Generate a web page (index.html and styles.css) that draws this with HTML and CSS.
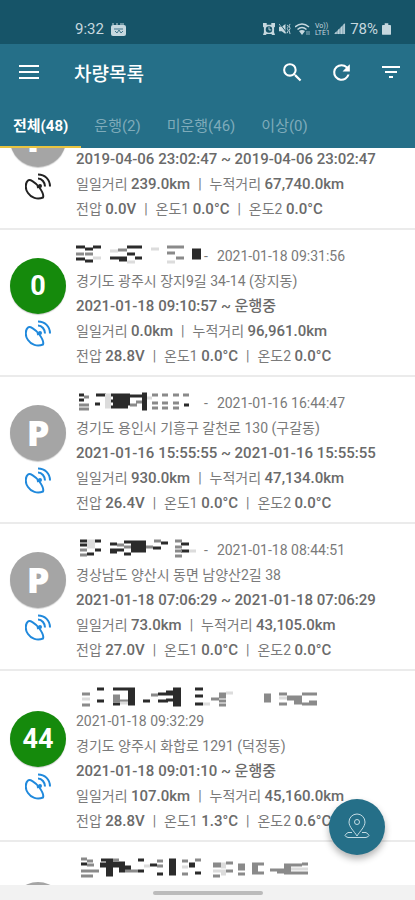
FILE: index.html
```html
<!DOCTYPE html>
<html lang="ko">
<head>
    <meta charset="UTF-8">
    <meta name="viewport" content="width=device-width, initial-scale=1.0">
    <title>차량목록</title>
    <link rel="stylesheet" href="styles.css">
</head>
<body>
    <!-- shared icon -->
    <svg class="defs" aria-hidden="true">
        <symbol id="dish" viewBox="0 0 26 27">
            <path d="M3 7.500C5 6 10 9 14 14C17 18 19 22 18 24.500C12 27 6 24.500 3 20C0 16 0 10 3 7.500ZM12 14.500l3-1.500M13 5.500c4 0 7 4 7 8M13 1.500c7 0 12 5 12 12" />
            <circle cx="15" cy="13" r="1" />
        </symbol>
    </svg>

    <div class="status-bar">
        <span>9:32</span>
        <svg width="15" height="13" viewBox="0 0 15 13"><path d="M1 1h2M5 1h2M9 1h4" stroke="#c6d8df" stroke-width="1"/><rect y="2" width="15" height="11" rx="2" fill="#c6d8df"/><path d="M3 6h9M4 8l2 2 2-3 2 3 2-2" stroke="#40758a" fill="none"/></svg>
        <div class="status-icons">
            <svg width="12" height="12" viewBox="0 0 13 13"><path d="M0 0h4v2h5V0h4v4l-1 1v5l1 3h-3l-1-1H4l-1 1H0l1-3V5L0 4z" fill="#c6d8df"/><circle cx="6.500" cy="7" r="3.500" fill="#165468"/><path d="M6.500 4.500V7.500H9" stroke="#c6d8df" fill="none"/></svg>
            <svg width="12" height="12" viewBox="0 0 13 13"><path d="M0 4h3l4-3v11L3 9H0z" fill="#c6d8df"/><path d="M0 1l8 10M9 2l1 2-1 2 1 2-1 3M12 1l-1 2 1 3-1 2 1 4" stroke="#c6d8df" fill="none"/><path d="M1 1l7 9" stroke="#165468"/></svg>
            <svg width="15" height="13" viewBox="0 0 15 13"><path d="M0 4Q7 -2 14 4M2.500 6.500Q7 2.500 11.500 6.500" stroke="#c6d8df" stroke-width="1.500" fill="none"/><path d="M4 8q3-2 6 0l-3 4z" fill="#c6d8df"/><path d="M12 8v4M14 8v4" stroke="#8fb0bd"/></svg>
            <svg class="volte" width="16" height="14" viewBox="0 0 16 14"><text x="1" y="6">Vo))</text><text x="1" y="13">LTE1</text></svg>
            <svg width="12" height="12" viewBox="0 0 13 13"><path d="M0 12L12 0v12z" fill="#8fb0bd"/><path d="M2 12v-2M5 12V7M8 12V4M11 12V1" stroke="#c6d8df"/></svg>
            <span>78%</span>
            <svg width="9" height="12" viewBox="0 0 10 13"><path d="M3 0h4v2h2q1 0 1 1v9q0 1-1 1H1q-1 0-1-1V3q0-1 1-1h2z" fill="#c6d8df"/></svg>
        </div>
    </div>

    <header class="app-bar">
        <button type="button" class="menu-button" aria-label="메뉴">
            <svg width="20" height="14" viewBox="0 0 20 14"><path d="M0 1h20M0 7h20M0 13h20" stroke="currentColor" stroke-width="2"/></svg>
        </button>
        <h1>차량목록</h1>
        <button type="button" aria-label="검색">
            <svg width="25" height="25" viewBox="0 0 24 24"><path fill="currentColor" d="M15.500 14h-.790l-.280-.270A6.470 6.470 0 0 0 16 9.500 6.500 6.500 0 1 0 9.500 16c1.610 0 3.090-.590 4.230-1.570l.270.280v.790l5 4.990L20.490 19l-4.990-5zm-6 0C7.010 14 5 11.990 5 9.500S7.010 5 9.500 5 14 7.010 14 9.500 11.990 14 9.500 14z"/></svg>
        </button>
        <button type="button" aria-label="새로고침">
            <svg width="25" height="25" viewBox="0 0 24 24"><path fill="currentColor" d="M17.650 6.350A7.960 7.960 0 0 0 12 4a8 8 0 1 0 7.730 10h-2.080A6 6 0 1 1 12 6c1.660 0 3.140.690 4.220 1.780L13 11h7V4l-2.350 2.350z"/></svg>
        </button>
        <button type="button" aria-label="필터">
            <svg width="24" height="24" viewBox="0 0 24 24"><path fill="currentColor" d="M10 18h4v-2h-4v2zM3 6v2h18V6H3zm3 7h12v-2H6v2z"/></svg>
        </button>
    </header>

    <nav class="tabs">
        <a href="#all" class="active">전체(48)</a>
        <a href="#running">운행(2)</a>
        <a href="#stopped">미운행(46)</a>
        <a href="#error">이상(0)</a>
    </nav>

    <main class="vehicle-list" id="vehicleList">
        <article class="vehicle">
            <div class="vehicle-state">
                <span class="badge parked">P</span>
                <svg class="dish offline"><use href="#dish"/></svg>
            </div>
            <div class="vehicle-info">
                <p class="name"></p>
                <p></p>
                <p class="period">2019-04-06 23:02:47 ~ 2019-04-06 23:02:47</p>
                <p>일일거리 <b>239.0km</b><i>|</i>누적거리 <b>67,740.0km</b></p>
                <p>전압 <b>0.0V</b><i>|</i>온도1 <b>0.0°C</b><i>|</i>온도2 <b>0.0°C</b></p>
            </div>
        </article>

        <article class="vehicle">
            <div class="vehicle-state">
                <span class="badge running">0</span>
                <svg class="dish"><use href="#dish"/></svg>
            </div>
            <div class="vehicle-info">
                <p class="name">
                    <svg class="mosaic" width="128" height="25">
                        <path class="dark" d="M0 3h9M9 5h8M17 3h8M0 15h9M9 17h8M51 3h15M51 10h8M34 14h9M43 14h8M43 16h8M59 14h7M116 6h9M116 9h9M116 12h9M116 14h9"/>
                        <path class="mid" d="M0 10h8M9 10h8M42 6h9M91 3h17M91 9h8M100 14h8"/>
                        <path class="light" d="M17 14h8M34 7h8M51 18h8M75 5h8M91 18h8"/>
                    </svg>
                    <span>-</span><time>2021-01-18 09:31:56</time>
                </p>
                <p>경기도 광주시 장지9길 34-14 (장지동)</p>
                <p class="period">2021-01-18 09:10:57 ~ 운행중</p>
                <p>일일거리 <b>0.0km</b><i>|</i>누적거리 <b>96,961.0km</b></p>
                <p>전압 <b>28.8V</b><i>|</i>온도1 <b>0.0°C</b><i>|</i>온도2 <b>0.0°C</b></p>
            </div>
        </article>

        <article class="vehicle">
            <div class="vehicle-state">
                <span class="badge parked">P</span>
                <svg class="dish"><use href="#dish"/></svg>
            </div>
            <div class="vehicle-info">
                <p class="name">
                    <svg class="mosaic" width="128" height="25">
                        <path class="dark" d="M3 4h5M3 9h5M19 13h5M20 4h10M35 4h19M37 7h17M35 10h19M37 13h17M35 16h17M54 5h12M66 3h5M66 6h5M66 9h5M66 12h5M66 15h5M66 18h5M108 14h5"/>
                        <path class="mid" d="M8 6h5M3 14h10M3 18h10M54 14h7M60 11h6M76 4h6M86 4h6M97 4h6M107 4h6M76 12h6M86 12h6M97 12h6M76 17h6M86 17h6M97 17h6"/>
                        <path class="light" d="M29 4h6M29 7h6M29 10h6M29 13h6M29 16h6M71 7h5"/>
                    </svg>
                    <span>-</span><time>2021-01-16 16:44:47</time>
                </p>
                <p>경기도 용인시 기흥구 갈천로 130 (구갈동)</p>
                <p class="period">2021-01-16 15:55:55 ~ 2021-01-16 15:55:55</p>
                <p>일일거리 <b>930.0km</b><i>|</i>누적거리 <b>47,134.0km</b></p>
                <p>전압 <b>26.4V</b><i>|</i>온도1 <b>0.0°C</b><i>|</i>온도2 <b>0.0°C</b></p>
            </div>
        </article>

        <article class="vehicle">
            <div class="vehicle-state">
                <span class="badge parked">P</span>
                <svg class="dish"><use href="#dish"/></svg>
            </div>
            <div class="vehicle-info">
                <p class="name">
                    <svg class="mosaic" width="128" height="25">
                        <path class="dark" d="M4 3h7M19 3h6M4 7h7M19 12h6M11 16h7M34 6h7M34 12h14M34 14h7M48 16h7M55 4h15M55 7h15M55 10h15M55 13h15M48 4h7M77 10h8M85 5h7M105 6h8M105 13h8"/>
                        <path class="mid" d="M4 12h7M4 17h7M41 7h7M48 9h7M70 9h7M78 3h7M99 3h7M99 9h7M99 13h7M99 18h7"/>
                        <path class="light" d="M11 3h8M11 6h8M11 9h8M113 13h7"/>
                    </svg>
                    <span>-</span><time>2021-01-18 08:44:51</time>
                </p>
                <p>경상남도 양산시 동면 남양산2길 38</p>
                <p class="period">2021-01-18 07:06:29 ~ 2021-01-18 07:06:29</p>
                <p>일일거리 <b>73.0km</b><i>|</i>누적거리 <b>43,105.0km</b></p>
                <p>전압 <b>27.0V</b><i>|</i>온도1 <b>0.0°C</b><i>|</i>온도2 <b>0.0°C</b></p>
            </div>
        </article>

        <article class="vehicle">
            <div class="vehicle-state">
                <span class="badge running">44</span>
                <svg class="dish"><use href="#dish"/></svg>
            </div>
            <div class="vehicle-info">
                <p class="name long">
                    <svg class="mosaic" width="244" height="25">
                        <path class="dark" d="M21 4h7M21 16h7M37 4h15M37 19h7M52 4h7M52 7h7M52 10h7M52 13h7M52 16h7M52 19h7M67 16h7M97 4h8M90 7h15M82 9h23M97 12h8M90 15h15M82 16h10M97 18h8M97 20h8M119 4h8M119 11h8M119 19h8"/>
                        <path class="mid" d="M6 9h8M6 20h8M37 11h7M37 13h7M37 16h15M75 10h7M135 14h8M143 9h7M143 12h7M143 16h7M143 20h7M188 10h7M188 13h7M188 16h7M203 9h8M203 19h8M211 12h15M211 14h15M218 16h8M218 18h8M226 9h15M233 17h8M233 19h8M226 19h8"/>
                        <path class="light" d="M6 14h8M44 18h8M127 19h7M150 8h7M203 13h8"/>
                    </svg>
                </p>
                <p><time>2021-01-18 09:32:29</time></p>
                <p>경기도 양주시 화합로 1291 (덕정동)</p>
                <p class="period">2021-01-18 09:01:10 ~ 운행중</p>
                <p>일일거리 <b>107.0km</b><i>|</i>누적거리 <b>45,160.0km</b></p>
                <p>전압 <b>28.8V</b><i>|</i>온도1 <b>1.3°C</b><i>|</i>온도2 <b>0.6°C</b></p>
            </div>
        </article>

        <article class="vehicle">
            <div class="vehicle-state">
                <span class="badge parked"></span>
                <svg class="dish"><use href="#dish"/></svg>
            </div>
            <div class="vehicle-info">
                <p class="name long">
                    <svg class="mosaic" width="244" height="25">
                        <path class="dark" d="M5 8h6M25 4h6M24 8h7M24 10h7M30 4h7M30 7h7M30 10h7M30 13h7M30 16h7M30 19h7M37 7h12M37 10h12M43 13h12M43 15h6M49 11h6M62 4h6M62 15h6M74 9h7M81 18h6M93 4h7M93 7h7M93 10h7M93 13h7M93 16h7M93 18h7M113 8h6M113 10h6M119 17h6"/>
                        <path class="mid" d="M5 3h6M11 5h6M11 9h7M5 15h18M5 20h12M37 4h6M49 15h13M81 5h6M81 10h6M106 5h6M106 18h6M119 4h6M137 8h8M137 10h8M137 20h7M150 7h7M150 15h7M162 9h7M162 11h7M162 13h7M162 18h7M176 8h12M176 11h6M176 14h6M176 17h12M194 14h14M201 16h7M208 9h18M208 11h7M208 14h7M208 17h18M226 8h6M226 17h6"/>
                        <path class="light" d="M68 10h6M106 11h6M137 15h13M145 8h5M145 11h5M145 18h5M215 13h17"/>
                    </svg>
                </p>
                <p></p>
                <p></p>
                <p></p>
                <p></p>
                <p></p>
            </div>
        </article>
    </main>

    <button type="button" class="map-button" aria-label="지도">
        <svg width="26" height="28" viewBox="0 0 26 28"><path d="M13 23C10 18 5 14 5 9a8 8 0 0 1 16 0c0 5-5 9-8 14zM8 19.500H4q-3 2-3 3t3 2h18q3-1 3-2t-3-3h-4"/><circle cx="13" cy="9" r="2.500"/></svg>
    </button>

    <div class="gesture-bar"><span></span></div>

    <script>
        // open the list part way down the first vehicle
        document.getElementById('vehicleList').scrollTop = 65;
    </script>
</body>
</html>
```

FILE: styles.css
```css
* {
    box-sizing: border-box;
}
body {
    display: flex;
    flex-direction: column;
    height: 100vh;
    margin: 0;
    overflow: hidden;
    background-color: #fff;
    color: #7a7a7a;
    font-family: Roboto, "Noto Sans CJK KR", sans-serif;
    font-size: 14px;
}
button {
    display: flex;
    align-items: center;
    justify-content: center;
    padding: 0;
    border: none;
    background: none;
    color: #fff;
    cursor: pointer;
}
.defs {
    position: absolute;
    width: 0;
    height: 0;
}
.status-bar {
    display: flex;
    align-items: center;
    gap: 7px;
    height: 44px;
    padding: 14px 24px 0 75px;
    background-color: #165468;
    color: #c6d8df;
    font-size: 15px;
}
.status-icons {
    display: flex;
    align-items: center;
    gap: 4px;
    margin-left: auto;
}
.volte {
    overflow: visible;
}
.volte text {
    fill: #c6d8df;
    font-size: 7px;
}
.app-bar {
    display: flex;
    align-items: center;
    height: 56px;
    background-color: #256f88;
    color: #fff;
}
.app-bar h1 {
    flex: 1;
    margin: 0;
    font-size: 19px;
    font-weight: 500;
}
.app-bar button {
    width: 49px;
    height: 48px;
}
.app-bar .menu-button {
    width: 58px;
    margin-right: 16px;
}
.tabs {
    display: flex;
    height: 48px;
    background-color: #256f88;
    font-size: 15px;
}
.tabs a {
    display: flex;
    align-items: center;
    padding: 3px 13px 0;
    border-bottom: 2px solid transparent;
    color: #7fabba;
    text-decoration: none;
}
.tabs a.active {
    border-color: #e8c440;
    color: #fff;
    font-weight: 700;
}
.vehicle-list {
    flex: 1;
    min-height: 0;
    overflow-y: auto;
    scrollbar-width: none;
}
.vehicle {
    display: flex;
    align-items: center;
    border-bottom: 2px solid #ebebeb;
}
.vehicle-state {
    display: flex;
    flex-direction: column;
    align-items: center;
    gap: 6px;
    width: 76px;
}
.badge {
    display: flex;
    align-items: center;
    justify-content: center;
    width: 56px;
    height: 56px;
    border-radius: 50%;
    color: #fff;
    font-size: 27px;
    font-weight: 700;
    box-shadow: 0 1px 1px #ccc;
}
.badge.running {
    background-color: #158a0c;
}
.badge.parked {
    background-color: #a5a5a5;
    font-family: "Open Sans", sans-serif;
    font-size: 36px;
    font-weight: 800;
    line-height: 1;
}
.dish {
    width: 26px;
    height: 27px;
    fill: none;
    stroke: #2089dc;
    stroke-width: 2;
}
.dish.offline {
    stroke: #222;
}
.vehicle-info {
    flex: 1;
    padding: 14px 0 6px;
}
.vehicle-info p {
    height: 25px;
    margin: 0;
    line-height: 25px;
    white-space: nowrap;
}
.vehicle-info .name {
    display: flex;
}
.vehicle-info .long {
    height: 24px;
}
.name time {
    margin-left: 9px;
}
.vehicle-info b,
.vehicle-info .period {
    color: #6a6a6a;
    font-size: 15px;
    font-weight: 500;
}
.vehicle-info i {
    margin: 0 8px;
    font-style: normal;
}
.mosaic {
    fill: none;
    stroke-width: 3;
}
.mosaic .dark {
    stroke: #2b2b2b;
}
.mosaic .mid {
    stroke: #8a8a8a;
}
.mosaic .light {
    stroke: #dcdcdc;
}
.map-button {
    position: absolute;
    right: 30px;
    bottom: 45px;
    width: 56px;
    height: 56px;
    border-radius: 50%;
    background-color: #256f88;
    box-shadow: 0 4px 7px rgba(0, 0, 0, 0.3);
}
.map-button svg {
    fill: none;
    stroke: #c4dce4;
    stroke-width: 1;
}
.gesture-bar {
    display: flex;
    align-items: center;
    justify-content: center;
    height: 15px;
    background-color: #f2f2f2;
}
.gesture-bar span {
    width: 110px;
    height: 4px;
    border-radius: 2px;
    background-color: #bbb;
}
```
